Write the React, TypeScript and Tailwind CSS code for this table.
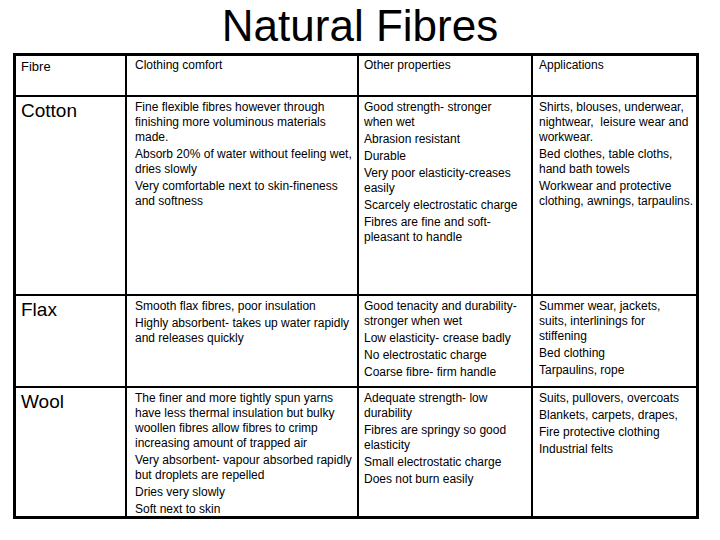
import React from "react";

type Para = string[];
type Cell = Para[];

const rows: { label: string; cells: Cell[] }[] = [
  {
    label: "Cotton",
    cells: [
      [
        ["Fine flexible fibres however through", "finishing more voluminous materials", "made."],
        ["Absorb 20% of water without feeling wet,", "dries slowly"],
        ["Very comfortable next to skin-fineness", "and softness"],
      ],
      [
        ["Good strength- stronger", "when wet"],
        ["Abrasion resistant"],
        ["Durable"],
        ["Very poor elasticity-creases", "easily"],
        ["Scarcely electrostatic charge"],
        ["Fibres are fine and soft-", "pleasant to handle"],
      ],
      [
        ["Shirts, blouses, underwear,", "nightwear,  leisure wear and", "workwear."],
        ["Bed clothes, table cloths,", "hand bath towels"],
        ["Workwear and protective", "clothing, awnings, tarpaulins."],
      ],
    ],
  },
  {
    label: "Flax",
    cells: [
      [
        ["Smooth flax fibres, poor insulation"],
        ["Highly absorbent- takes up water rapidly", "and releases quickly"],
      ],
      [
        ["Good tenacity and durability-", "stronger when wet"],
        ["Low elasticity- crease badly"],
        ["No electrostatic charge"],
        ["Coarse fibre- firm handle"],
      ],
      [
        ["Summer wear, jackets,", "suits, interlinings for", "stiffening"],
        ["Bed clothing"],
        ["Tarpaulins, rope"],
      ],
    ],
  },
  {
    label: "Wool",
    cells: [
      [
        [
          "The finer and more tightly spun yarns",
          "have less thermal insulation but bulky",
          "woollen fibres allow fibres to crimp",
          "increasing amount of trapped air",
        ],
        ["Very absorbent- vapour absorbed rapidly", "but droplets are repelled"],
        ["Dries very slowly"],
        ["Soft next to skin"],
      ],
      [
        ["Adequate strength- low", "durability"],
        ["Fibres are springy so good", "elasticity"],
        ["Small electrostatic charge"],
        ["Does not burn easily"],
      ],
      [
        ["Suits, pullovers, overcoats"],
        ["Blankets, carpets, drapes,"],
        ["Fire protective clothing"],
        ["Industrial felts"],
      ],
    ],
  },
];

const padCls = ["pl-[8px]", "pl-[5px]", "pl-[6px]"];

function BodyCell({ cell, idx }: { cell: Cell; idx: number }) {
  return (
    <div className={`bg-white pt-[3px] pr-[2px] text-[12px] leading-[15px] ${padCls[idx]}`}>
      {cell.map((p, i) => (
        <div key={i} className={i > 0 ? "mt-[2px]" : ""}>
          {p.map((l, j) => (
            <div key={j} className="whitespace-pre">
              {l}
            </div>
          ))}
        </div>
      ))}
    </div>
  );
}

export default function App() {
  return (
    <div className="w-[720px] h-[540px] bg-white text-black font-['Liberation_Sans',Arial,sans-serif] overflow-hidden">
      <h1 className="pt-[4px] text-center text-[44px] leading-[44px] font-normal">Natural Fibres</h1>
      <div className="mt-[5px] ml-[13px] w-[686px] border-[3px] border-black bg-black grid grid-cols-[109px_230px_172px_163px] grid-rows-[39px_197px_90px_128px] gap-[2px]">
        <div className="bg-white pl-[5px] pt-[3px] text-[13px] leading-[15px]">Fibre</div>
        <div className="bg-white pl-[8px] pt-[2px] text-[12px] leading-[15px]">Clothing comfort</div>
        <div className="bg-white pl-[5px] pt-[2px] text-[12px] leading-[15px]">Other properties</div>
        <div className="bg-white pl-[6px] pt-[2px] text-[12px] leading-[15px]">Applications</div>
        {rows.map((r) => (
          <React.Fragment key={r.label}>
            <div className="bg-white pl-[5px] pt-[3px] text-[19px] leading-[22px]">{r.label}</div>
            {r.cells.map((c, i) => (
              <BodyCell key={i} cell={c} idx={i} />
            ))}
          </React.Fragment>
        ))}
      </div>
    </div>
  );
}
